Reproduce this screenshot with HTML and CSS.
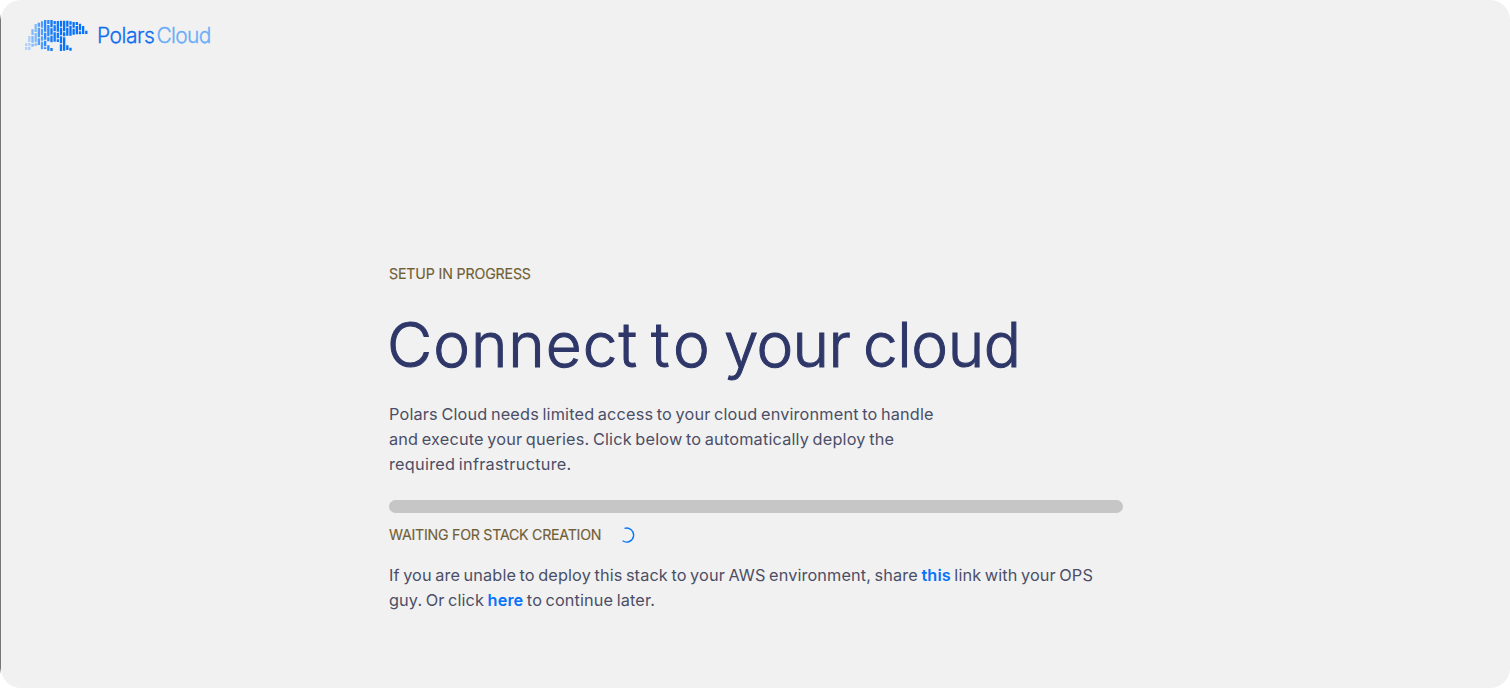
FILE: index.html
```
<!DOCTYPE html>
<html lang="en">
<head>
<meta charset="utf-8">
<title>Polars Cloud</title>
<link rel="stylesheet" href="styles.css">
</head>
<body>
<div class="page">
  <header class="header">
    <svg class="bear" viewBox="15 18 189 94" fill="none" stroke-width="7">
      <g stroke="#a9cffb"><path d="M18.5 88v8M18.5 99v8M28 66v18M28 87v8M28 98v10"/></g>
      <g stroke="#84bafb"><path d="M37.500 46v17M37.500 66v20M37.500 89v9M47 30v24M47 57v28M47 88v7"/></g>
      <g stroke="#559ffa"><path d="M56.500 26v12M56.500 41v29M56.500 73v20M66 22v19M66 44v20M66 67v13M66 83v23"/></g>
      <g stroke="#2e8afa"><path d="M75.500 18v35M75.500 56v21M75.500 80v17M75.500 100v5M85 18v12M85 33v34M85 70v12M85 94v16"/></g>
      <g stroke="#1279fa"><path d="M94.500 18v22M94.500 43v19M94.500 65v20M94.500 102v9M104 21v10M104 34v18M104 55v28M113.500 21v32M113.500 56v17M113.500 76v8"/></g>
      <g stroke="#0873fa"><path d="M123 20v18M123 41v23M123 67v21M123 91v20M132.500 20v32M132.500 55v12M132.500 70v40M142 20v18M142 41v24M142 94v14M151.500 22v10M151.500 35v30M151.500 101v9M161 24v17M161 44v18M170.500 24v9M170.500 36v25M180 29v20M180 52v9M189.500 36v24M199 50v10"/></g>
    </svg>
    <div class="brand"><span class="brand-polars">Polars</span><span class="brand-cloud">Cloud</span></div>
  </header>
  <main class="content">
    <div class="label label-setup">SETUP IN PROGRESS</div>
    <h1 class="title"><span class="w1">Connect</span> <span class="w2">to</span> <span class="w3">your</span> <span class="w4">cloud</span></h1>
    <p class="copy"><span class="l1">Polars Cloud needs limited access to your cloud environment to handle</span><br><span class="l2">and execute your queries. Click below to automatically deploy the</span><br><span class="l3">required infrastructure.</span></p>
    <div class="progress"></div>
    <div class="status">
      <span class="label label-wait">WAITING FOR STACK CREATION</span>
      <svg class="spinner" viewBox="0 0 16 16" fill="none" stroke="#0877fb" stroke-width="1.4"><path d="M3.500 1.400A7 7 0 1 1 1.600 13.800"/></svg>
    </div>
    <p class="copy help"><span class="l4">If you are unable to deploy this stack to your AWS environment, share <a class="link">this</a> link with your OPS</span><br><span class="l5">guy. Or click <a class="link">here</a> to continue later.</span></p>
  </main>
</div>
</body>
</html>
```
FILE: styles.css
```
body { margin: 0; background: linear-gradient(#fff 0 14px, #777 20px 668px, #fff 674px) left / 1px 100% no-repeat #fff; font-family: Inter, "Open Sans", sans-serif; }
.page { box-sizing: border-box; height: 688px; margin-left: 1px; background: #f1f1f1; border-radius: 20px; overflow: hidden; }
.header { display: flex; align-items: flex-start; padding: 20px 0 0 24px; height: 52px; box-sizing: border-box; }
.bear { width: 63px; height: 31.300px; flex: none; }
.brand { display: flex; margin-left: 9px; margin-top: 3px; font-size: 21px; line-height: 26px; }
.brand-polars { width: 59.500px; color: #0f6df0; letter-spacing: -0.500px; font-weight: 300; -webkit-text-stroke: 0.300px; }
.brand-cloud { color: #69adf9; letter-spacing: -0.700px; font-weight: 300; -webkit-text-stroke: 0.300px; }
.content { width: 734px; margin-left: 388px; padding-top: 212px; }
.label { color: #715f37; font-size: 14.200px; line-height: 20px; font-weight: 400; white-space: nowrap; -webkit-text-stroke: 0.150px; }
.label-setup { letter-spacing: -0.150px; }
.title { display: flex; margin: 29px 0 0 -2px; height: 84px; font-size: 62px; line-height: 64px; font-weight: 300; color: #2e3768; white-space: nowrap; -webkit-text-stroke: 1px; }
.w1 { width: 264px; letter-spacing: 1px; }
.w2 { width: 73px; letter-spacing: 4px; }
.w3 { width: 139px; letter-spacing: -0.700px; }
.w4 { letter-spacing: -0.400px; }
.copy { margin: 5px 0 0; font-size: 16.300px; line-height: 25px; color: #4b4e66; white-space: nowrap; word-spacing: -1.200px; }
.l1 { letter-spacing: 0.160px; }
.l2 { letter-spacing: 0.170px; }
.l3 { letter-spacing: 0.250px; }
.l4 { letter-spacing: 0.120px; }
.l5 { letter-spacing: 0.120px; }
.progress { height: 13px; margin-top: 23px; border-radius: 7px; background: #c6c6c6; }
.status { display: flex; align-items: center; height: 20px; margin-top: 12px; gap: 19px; }
.label-wait { width: 213px; letter-spacing: -0.250px; }
.spinner { width: 16px; height: 16px; }
.help { margin-top: 18px; }
.link { color: #0873fa; font-weight: 600; }
```
